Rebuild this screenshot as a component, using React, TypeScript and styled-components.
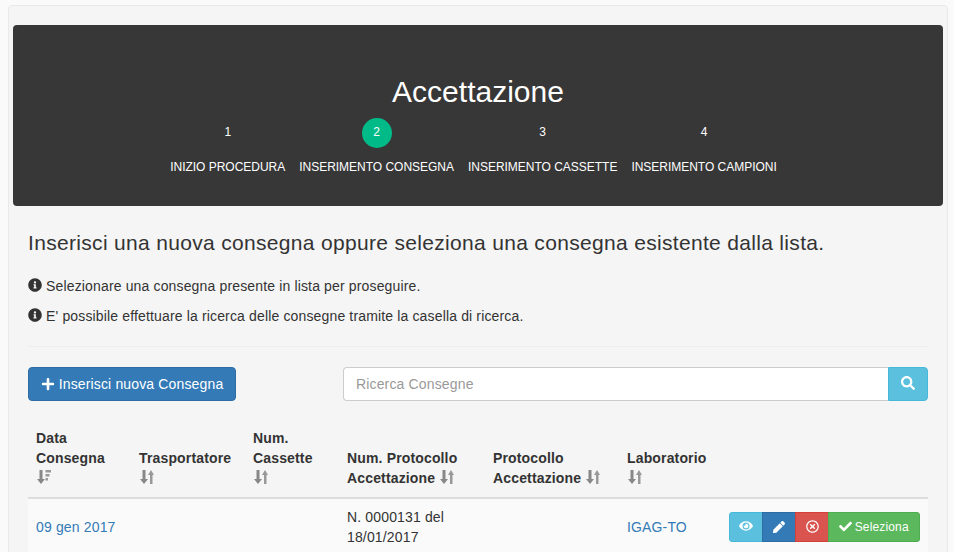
import styled, { createGlobalStyle } from "styled-components";
import { FaCheck, FaEye, FaInfoCircle, FaPlus, FaRegTimesCircle, FaSearch, FaPen } from "react-icons/fa";

const GlobalStyle = createGlobalStyle`
  html, body {
    margin: 0;
    height: 552px;
    overflow: hidden;
    background: #fafafa;
  }
  * { box-sizing: border-box; }
  body {
    font-family: "Liberation Sans", Arial, sans-serif;
    font-size: 14px;
    line-height: 20px;
    color: #333;
    letter-spacing: 0.15px;
  }
`;

const steps = [
  { num: 1, label: "INIZIO PROCEDURA" },
  { num: 2, label: "INSERIMENTO CONSEGNA", active: true },
  { num: 3, label: "INSERIMENTO CASSETTE" },
  { num: 4, label: "INSERIMENTO CAMPIONI" },
];

function SortIcon({ sorted }: { sorted?: boolean }) {
  return (
    <SortSvg viewBox="0 0 14 14" width="14" height="14">
      <path d="M2.500 0h3v9H8l-4 5-4-5h2.500z" fill="#888" />
      {sorted ? (
        <path d="M8.500 0H14v2.500H8.500zM8.500 4h4v2.500h-4zM8.500 8H11v2.500H8.500z" fill="#999" />
      ) : (
        <path d="M10 14h2.500V5H14L11 0 8 5h2z" fill="#999" />
      )}
    </SortSvg>
  );
}

export default function App() {
  return (
    <>
      <GlobalStyle />
      <Panel>
        <Jumbotron>
          <Title>Accettazione</Title>
          <Steps>
            {steps.map((s) => (
              <Step key={s.num}>
                <StepCircle $active={s.active}>{s.num}</StepCircle>
                <StepLabel>{s.label}</StepLabel>
              </Step>
            ))}
          </Steps>
        </Jumbotron>
        <Content>
          <Lead>Inserisci una nuova consegna oppure seleziona una consegna esistente dalla lista.</Lead>
          <Hint>
            <FaInfoCircle /> Selezionare una consegna presente in lista per proseguire.
          </Hint>
          <Hint>
            <FaInfoCircle /> E' possibile effettuare la ricerca delle consegne tramite la casella di ricerca.
          </Hint>
          <Rule />
          <Toolbar>
            <PrimaryButton>
              <FaPlus /> Inserisci nuova Consegna
            </PrimaryButton>
            <SearchGroup>
              <SearchInput placeholder="Ricerca Consegne" />
              <SearchButton aria-label="Cerca">
                <FaSearch />
              </SearchButton>
            </SearchGroup>
          </Toolbar>
          <Table>
            <colgroup>
              <col width="103" />
              <col width="114" />
              <col width="94" />
              <col width="146" />
              <col width="134" />
              <col width="102" />
              <col width="207" />
            </colgroup>
            <thead>
              <tr>
                <Th>
                  Data Consegna <SortIcon sorted />
                </Th>
                <Th>
                  Trasportatore <SortIcon />
                </Th>
                <Th>
                  Num. Cassette <SortIcon />
                </Th>
                <Th>
                  Num. Protocollo Accettazione <SortIcon />
                </Th>
                <Th>
                  Protocollo Accettazione <SortIcon />
                </Th>
                <Th>
                  Laboratorio <SortIcon />
                </Th>
                <Th />
              </tr>
            </thead>
            <tbody>
              <tr>
                <Td>
                  <RowLink href="#">09 gen 2017</RowLink>
                </Td>
                <Td />
                <Td />
                <Td>N. 0000131 del 18/01/2017</Td>
                <Td />
                <Td>
                  <RowLink href="#">IGAG-TO</RowLink>
                </Td>
                <Td>
                  <ActionGroup>
                    <ActionButton $bg="#5bc0de" $border="#46b8da" aria-label="Vedi">
                      <FaEye size={14} />
                    </ActionButton>
                    <ActionButton $bg="#337ab7" $border="#2e6da4" aria-label="Modifica">
                      <FaPen size={12} />
                    </ActionButton>
                    <ActionButton $bg="#d9534f" $border="#d43f3a" aria-label="Elimina">
                      <FaRegTimesCircle size={13} />
                    </ActionButton>
                    <SelectButton $bg="#5cb85c" $border="#4cae4c">
                      <FaCheck size={13} /> Seleziona
                    </SelectButton>
                  </ActionGroup>
                </Td>
              </tr>
            </tbody>
          </Table>
        </Content>
      </Panel>
    </>
  );
}

const Panel = styled.div`
  margin: 5px 6px 0 8px;
  padding: 19px 4px 0;
  background: #f5f5f5;
  border: 1px solid #e9e9e9;
  border-radius: 4px;
  height: 600px;
`;

const Jumbotron = styled.div`
  height: 181px;
  padding-top: 49px;
  background: #373737;
  border-radius: 4px;
  color: #fff;
  text-align: center;
`;

const Title = styled.h1`
  margin: 0 0 8px;
  font-size: 30px;
  font-weight: 400;
  line-height: 36px;
  letter-spacing: 0;
`;

const Steps = styled.div`
  display: flex;
  justify-content: center;
  gap: 14px;
  padding-right: 9px;
`;

const Step = styled.div`
  display: flex;
  flex-direction: column;
  align-items: center;
`;

const StepCircle = styled.div<{ $active?: boolean }>`
  width: 30px;
  height: 30px;
  border-radius: 50%;
  background: ${(p) => (p.$active ? "#00bb88" : "transparent")};
  color: #fff;
  font-size: 12px;
  line-height: 28px;
  text-align: center;
  letter-spacing: 0;
`;

const StepLabel = styled.div`
  margin-top: 9px;
  font-size: 12px;
  line-height: 20px;
  letter-spacing: -0.02px;
  white-space: nowrap;
`;

const Content = styled.div`
  padding: 0 15px;
`;

const Lead = styled.p`
  margin: 23px 0 20px;
  font-size: 21px;
  font-weight: 300;
  line-height: 27px;
  letter-spacing: 0.32px;
`;

const Hint = styled.p`
  margin: 0 0 10px;
  font-size: 14px;
  line-height: 20px;

  svg {
    width: 14px;
    height: 14px;
    vertical-align: -1px;
    color: #333;
  }
`;

const Rule = styled.hr`
  margin: 20px 0;
  border: 0;
  border-top: 1px solid #eee;
`;

const Toolbar = styled.div`
  display: flex;
  align-items: flex-start;
  justify-content: space-between;
  margin-bottom: 20px;
`;

const PrimaryButton = styled.button`
  height: 34px;
  width: 208px;
  padding: 0;
  background: #337ab7;
  border: 1px solid #2e6da4;
  border-radius: 4px;
  color: #fff;
  font: inherit;
  letter-spacing: 0.15px;

  svg {
    width: 14px;
    height: 14px;
    vertical-align: -2px;
  }
`;

const SearchGroup = styled.div`
  display: flex;
  width: 585px;
`;

const SearchInput = styled.input`
  flex: 1;
  min-width: 0;
  height: 34px;
  padding: 6px 12px;
  background: #fff;
  border: 1px solid #ccc;
  border-right: 0;
  border-radius: 4px 0 0 4px;
  font: inherit;
  letter-spacing: 0.15px;
  color: #555;

  &::placeholder {
    color: #999;
  }
`;

const SearchButton = styled.button`
  width: 40px;
  height: 34px;
  padding: 0;
  background: #5bc0de;
  border: 1px solid #46b8da;
  border-radius: 0 4px 4px 0;
  color: #fff;

  svg {
    width: 14px;
    height: 14px;
    vertical-align: -1px;
  }
`;

const Table = styled.table`
  width: 900px;
  table-layout: fixed;
  border-collapse: collapse;
`;

const Th = styled.th`
  padding: 7px 8px 9px;
  border-bottom: 2px solid #ddd;
  font-weight: 700;
  text-align: left;
  vertical-align: bottom;
`;

const SortSvg = styled.svg`
  margin: 0 2px 0 1px;
  vertical-align: -1px;
`;

const Td = styled.td`
  padding: 8px;
  background: #fafafa;
  vertical-align: middle;
`;

const RowLink = styled.a`
  color: #337ab7;
  text-decoration: none;
`;

const ActionGroup = styled.div`
  display: flex;
`;

const ActionButton = styled.button<{ $bg: string; $border: string }>`
  width: 34px;
  height: 30px;
  padding: 0;
  margin-left: -1px;
  background: ${(p) => p.$bg};
  border: 1px solid ${(p) => p.$border};
  color: #fff;
  font: inherit;
  font-size: 12px;
  line-height: 18px;
  letter-spacing: 0.15px;
  white-space: nowrap;

  &:first-child {
    margin-left: 0;
    border-radius: 3px 0 0 3px;
  }

  svg {
    vertical-align: -2px;
  }
`;

const SelectButton = styled(ActionButton)`
  width: 92px;
  border-radius: 0 3px 3px 0;

  svg {
    margin-right: -1px;
  }
`;
